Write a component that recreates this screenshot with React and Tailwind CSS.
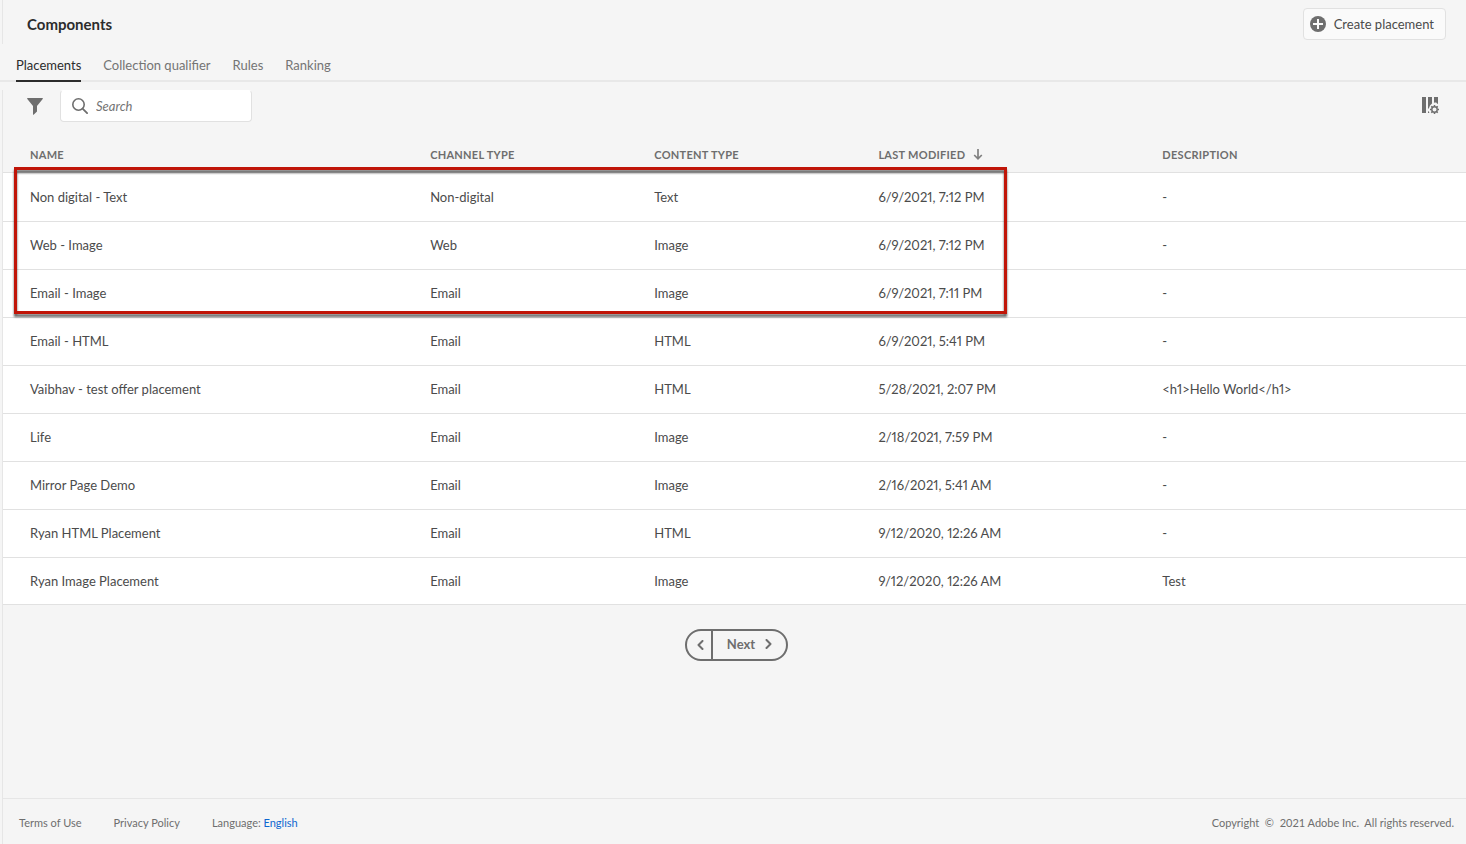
import React, { useState } from 'react';

const tabs = ['Placements', 'Collection qualifier', 'Rules', 'Ranking'];

const placements = [
  { name: 'Non digital - Text', channel: 'Non-digital', content: 'Text', modified: '6/9/2021, 7:12 PM', description: '-' },
  { name: 'Web - Image', channel: 'Web', content: 'Image', modified: '6/9/2021, 7:12 PM', description: '-' },
  { name: 'Email - Image', channel: 'Email', content: 'Image', modified: '6/9/2021, 7:11 PM', description: '-' },
  { name: 'Email - HTML', channel: 'Email', content: 'HTML', modified: '6/9/2021, 5:41 PM', description: '-' },
  { name: 'Vaibhav - test offer placement', channel: 'Email', content: 'HTML', modified: '5/28/2021, 2:07 PM', description: '<h1>Hello World</h1>' },
  { name: 'Life', channel: 'Email', content: 'Image', modified: '2/18/2021, 7:59 PM', description: '-' },
  { name: 'Mirror Page Demo', channel: 'Email', content: 'Image', modified: '2/16/2021, 5:41 AM', description: '-' },
  { name: 'Ryan HTML Placement', channel: 'Email', content: 'HTML', modified: '9/12/2020, 12:26 AM', description: '-' },
  { name: 'Ryan Image Placement', channel: 'Email', content: 'Image', modified: '9/12/2020, 12:26 AM', description: 'Test' },
];

function PlusIcon() {
  return (
    <svg width="16" height="16" viewBox="0 0 16 16" aria-hidden="true">
      <circle cx="8" cy="8" r="8" fill="#6e6e6e" />
      <path d="M8 3v10M3 8h10" stroke="#fafafa" strokeWidth="2" />
    </svg>
  );
}

function FilterIcon() {
  return (
    <svg width="16" height="17" viewBox="0 0 16 17" aria-hidden="true">
      <path d="M.7 0h14.6c.5 0 .7.5.4.9L10 8v5.6L6.6 16.7c-.3.2-.6 0-.6-.3V8L.3.9C0 .5.2 0 .7 0z" fill="#6e6e6e" />
    </svg>
  );
}

function SearchIcon() {
  return (
    <svg width="16" height="16" viewBox="0 0 16 16" fill="none" stroke="#6e6e6e" className="shrink-0" aria-hidden="true">
      <circle cx="6.5" cy="6.5" r="5.7" strokeWidth="1.6" />
      <path d="M10.6 10.6l4.5 4.5" strokeWidth="1.8" strokeLinecap="round" />
    </svg>
  );
}

function ColumnSettingsIcon() {
  return (
    <svg width="18" height="18" viewBox="0 0 18 18" fill="none" aria-hidden="true">
      <path d="M0 0h4v16H0zM6 0h4v6.4L8 8.500 7 11l-1 1zM6 14l1.200 1V16H6zM12 0h4v7l-1-.4-.8-1h-1.800L12 6.200z" fill="#6e6e6e" />
      <circle cx="12.500" cy="12.500" r="2.700" stroke="#6e6e6e" strokeWidth="1.400" />
      <path d="M12.500 8v1.500M12.500 15.500V17M8 12.500h1.500M15.500 12.500H17M9.300 9.300l1.100 1.100M14.600 14.600l1.100 1.100M15.700 9.300l-1.100 1.100M10.400 14.600l-1.100 1.100" stroke="#6e6e6e" strokeWidth="1.500" />
    </svg>
  );
}

function SortArrow() {
  return (
    <svg width="10" height="11" viewBox="0 0 10 11" fill="none" stroke="#808080" strokeWidth="1.7" aria-hidden="true">
      <path d="M5 0v9.500M1.200 6L5 9.800 8.800 6" />
    </svg>
  );
}

function Chevron({ left }) {
  return (
    <svg width="7" height="10" viewBox="0 0 7 10" fill="none" stroke="#6e6e6e" strokeWidth="2" strokeLinecap="round" strokeLinejoin="round" aria-hidden="true">
      <path d={left ? 'M5.500 1L1.500 5l4 4' : 'M1.500 1l4 4-4 4'} />
    </svg>
  );
}

export default function App() {
  const [activeTab, setActiveTab] = useState('Placements');
  const [search, setSearch] = useState('');

  const rows = placements.filter((p) => p.name.toLowerCase().includes(search.toLowerCase()));

  return (
    <div className="flex min-h-screen flex-col bg-[#f5f5f5] font-['Lato','Open_Sans',sans-serif] text-[13px] leading-5 text-[#4b4b4b]">
      {/* Title bar */}
      <header className="ml-0.5 flex h-11 items-start justify-between border-l border-[#e6e6e6] pt-2 pr-5 pl-6">
        <h1 className="pt-1.5 text-[15px] leading-5 font-bold text-[#2c2c2c]">Components</h1>
        <button className="flex h-8 items-center gap-2 rounded border border-[#e1e1e1] bg-[#fafafa] pr-[11px] pl-1.5">
          <PlusIcon />
          Create placement
        </button>
      </header>

      {/* Tabs */}
      <nav className="flex h-[38px] gap-[22px] border-b-2 border-[#e8e8e8] px-4 pt-[11px]">
        {tabs.map((tab) => (
          <button
            key={tab}
            onClick={() => setActiveTab(tab)}
            className={`h-[27px] border-b-2 pb-1.5 ${activeTab === tab ? 'border-[#2c2c2c] text-[#2c2c2c]' : 'border-transparent text-[#747474]'}`}
          >
            {tab}
          </button>
        ))}
      </nav>

      <main className="mt-2 ml-0.5 flex grow flex-col border-l border-[#e6e6e6]">
        {/* Filter and search */}
        <div className="flex h-8 items-center pr-[26px] pl-6">
          <button aria-label="Filter">
            <FilterIcon />
          </button>
          <label className="ml-[17px] flex h-8 w-48 items-center gap-2 rounded border border-[#e1e1e1] border-t-white bg-white px-[11px]">
            <SearchIcon />
            <input
              type="text"
              aria-label="Search"
              placeholder="Search"
              value={search}
              onChange={(e) => setSearch(e.target.value)}
              className="w-full min-w-0 bg-transparent outline-none placeholder:text-[#747474] placeholder:italic"
            />
          </label>
          <button className="ml-auto" aria-label="Configure columns">
            <ColumnSettingsIcon />
          </button>
        </div>

        {/* Placement list */}
        <div className="relative mt-4">
          <table className="w-full table-fixed border-collapse text-left">
            <thead>
              <tr className="h-[34px] border-b border-[#e1e1e1] text-[11px] leading-4 tracking-wide text-[#6e6e6e] uppercase">
                <th className="w-[27.35%] pl-[27px] font-bold">Name</th>
                <th className="w-[15.32%] pl-[27px] font-bold">Channel type</th>
                <th className="w-[15.32%] pl-[27px] font-bold">Content type</th>
                <th className="w-[19.41%] pl-[27px] font-bold">
                  <span className="flex items-center gap-2">
                    Last modified
                    <SortArrow />
                  </span>
                </th>
                <th className="pl-[27px] font-bold">Description</th>
              </tr>
            </thead>
            <tbody className="bg-white proportional-nums">
              {rows.map((p) => (
                <tr key={p.name} className="h-12 border-b border-[#e1e1e1] first:h-[49px] last:h-[47px]">
                  <td className="pl-[27px]">{p.name}</td>
                  <td className="pl-[27px]">{p.channel}</td>
                  <td className="pl-[27px]">{p.content}</td>
                  <td className="pl-[27px]">{p.modified}</td>
                  <td className="pl-[27px]">{p.description}</td>
                </tr>
              ))}
            </tbody>
          </table>
          {/* Outline around the newest placements */}
          <div className="pointer-events-none absolute top-[29px] left-[11px] h-[147px] w-[67.9%] border-3 border-[#c01508] drop-shadow-[0_3px_1px_rgba(0,0,0,0.6)]" />
        </div>

        {/* Pagination */}
        <div className="mt-6 ml-1 flex h-8 self-center rounded-full border-2 border-[#6e6e6e] font-bold text-[#6e6e6e]">
          <button className="flex w-[26px] items-center justify-center border-r-2 border-[#6e6e6e] pl-1" aria-label="Previous">
            <Chevron left />
          </button>
          <button className="flex items-center gap-2.5 px-3.5 pb-px">
            Next
            <Chevron />
          </button>
        </div>

        <footer className="mt-auto flex h-[46px] items-center justify-between border-t border-[#e6e6e6] pt-0.5 pr-3 pl-4 text-[11px] leading-4 text-[#6e6e6e]">
          <div className="flex gap-8">
            <a href="#terms">Terms of Use</a>
            <a href="#privacy">Privacy Policy</a>
            <span>
              Language: <a href="#language" className="text-[#0d66d0]">English</a>
            </span>
          </div>
          <p className="whitespace-pre">Copyright  ©  2021 Adobe Inc.  All rights reserved.</p>
        </footer>
      </main>
    </div>
  );
}
